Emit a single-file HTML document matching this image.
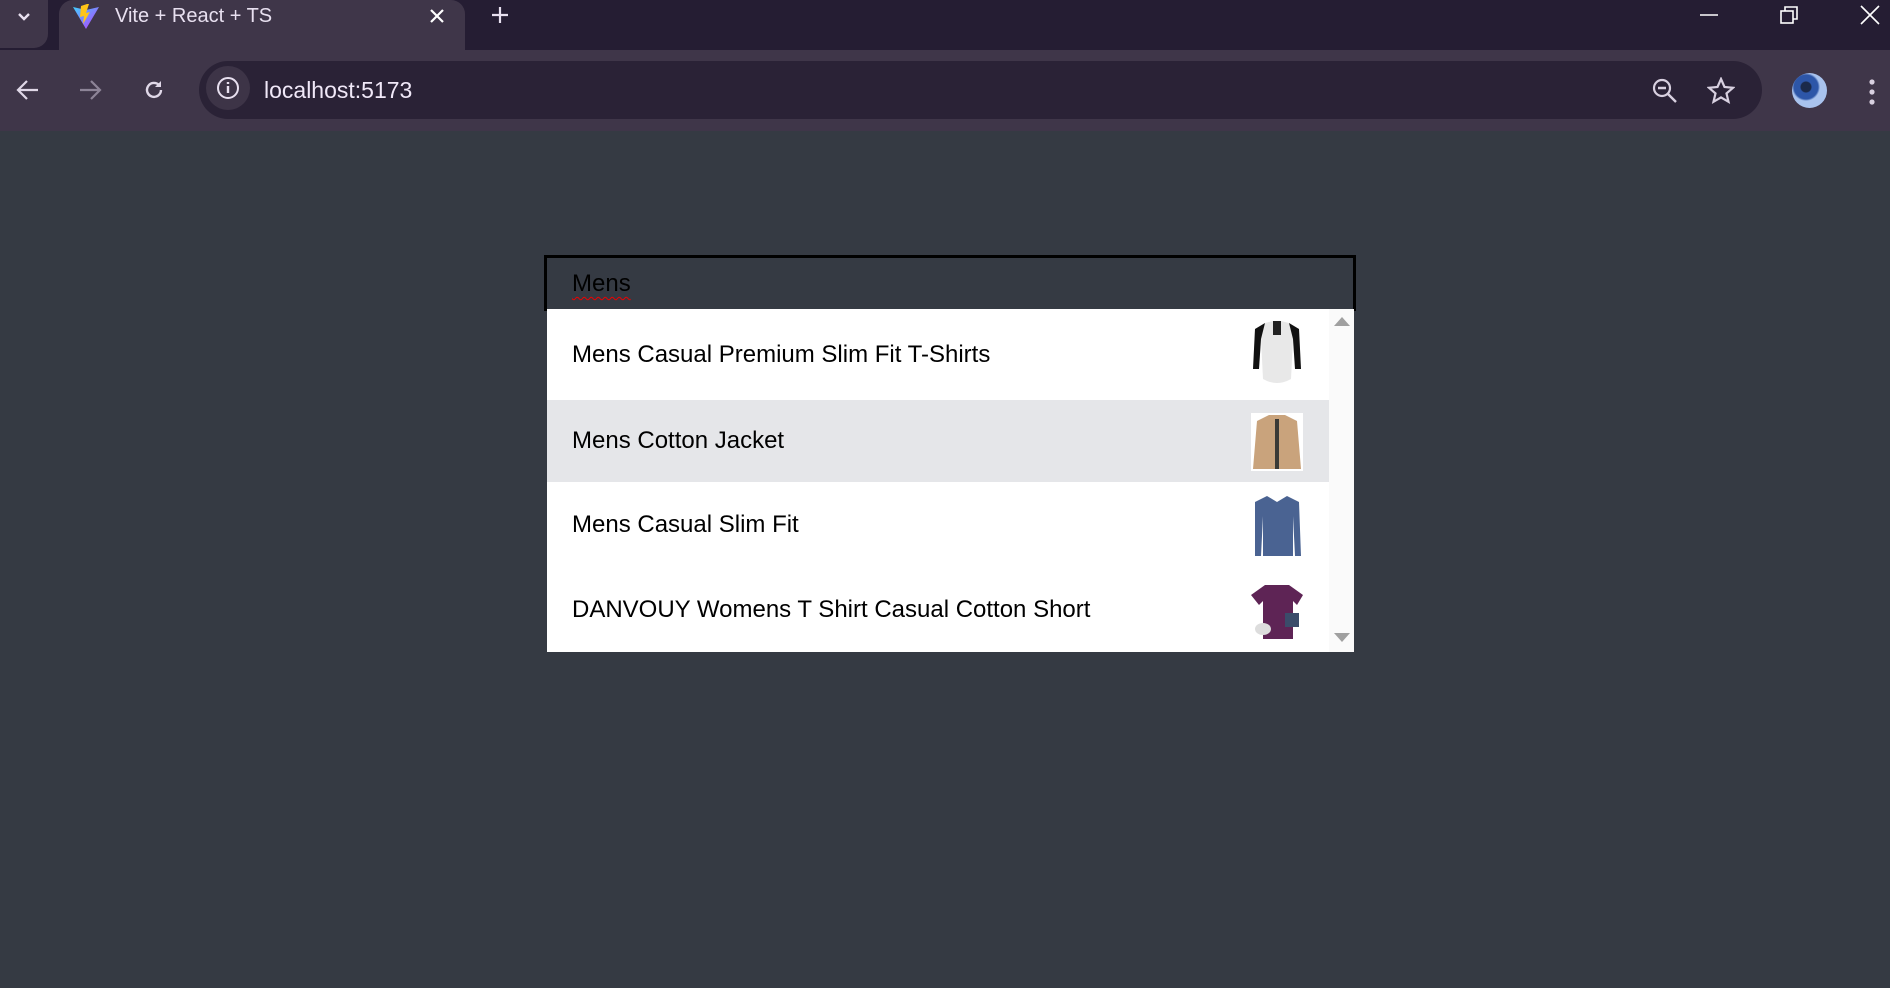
<!DOCTYPE html>
<html><head><meta charset="utf-8"><style>
*{margin:0;padding:0;box-sizing:border-box}
body{width:1890px;height:988px;background:#353a43;font-family:"Liberation Sans",sans-serif;position:relative;overflow:hidden}
.abs{position:absolute}
#tabs{left:0;top:0;width:1890px;height:50px;background:#251d33}
#tool{left:0;top:50px;width:1890px;height:81px;background:#3f3649}
#tab{left:59px;top:0;width:406px;height:52px;background:#3f3649;border-radius:14px 14px 0 0}
#omni{left:199px;top:61px;width:1563px;height:58px;background:#2a2236;border-radius:29px}
.row{position:absolute;left:0;width:782px;font-size:24px;color:#000;padding-left:25px;display:flex;align-items:center}
</style></head><body>
<div id="tabs" class="abs"></div>
<div class="abs" style="left:0;top:0;width:48px;height:48px;background:#3f3649;border-radius:0 0 14px 0"></div>
<svg class="abs" style="left:14px;top:7px" width="20" height="20" viewBox="0 0 20 20"><path d="M5 7l5 5 5-5" stroke="#e8e0f0" stroke-width="2.4" fill="none"/></svg>
<div id="tab" class="abs"></div>
<svg class="abs" style="left:72px;top:3px" width="28" height="28" viewBox="0 0 28 28"><defs><linearGradient id="g" x1="0" y1="0" x2="1" y2="1"><stop offset="0" stop-color="#41d1ff"/><stop offset="1" stop-color="#bd34fe"/></linearGradient></defs><path d="M1 4l13 22 13-22-13 3z" fill="url(#g)"/><path d="M15 1l-6 2-1 11 4-1-1 8 7-12-4 1 3-9z" fill="#ffc517"/></svg>
<div class="abs" style="left:115px;top:5px;font-size:20px;color:#e8e0f0">Vite + React + TS</div>
<svg class="abs" style="left:428px;top:7px" width="18" height="18" viewBox="0 0 18 18"><path d="M3 3l12 12M15 3L3 15" stroke="#fff" stroke-width="2.2"/></svg>
<svg class="abs" style="left:490px;top:5px" width="20" height="20" viewBox="0 0 20 20"><path d="M10 2v16M2 10h16" stroke="#e8e0f0" stroke-width="2.2"/></svg>
<svg class="abs" style="left:1700px;top:13px" width="20" height="4"><path d="M0 2h18" stroke="#fff" stroke-width="1.6"/></svg>
<svg class="abs" style="left:1780px;top:6px" width="20" height="20" viewBox="0 0 20 20"><rect x="1" y="5" width="12" height="12" fill="none" stroke="#fff" stroke-width="1.6"/><path d="M5 5V1h12v12h-4" fill="none" stroke="#fff" stroke-width="1.6"/></svg>
<svg class="abs" style="left:1860px;top:5px" width="20" height="20" viewBox="0 0 20 20"><path d="M1 1l18 18M19 1L1 19" stroke="#fff" stroke-width="1.6"/></svg>
<div id="tool" class="abs"></div>
<svg class="abs" style="left:16px;top:79px" width="24" height="22" viewBox="0 0 24 22"><path d="M22 11H3M11 2l-9 9 9 9" stroke="#e0d8e8" stroke-width="2.2" fill="none"/></svg>
<svg class="abs" style="left:78px;top:79px" width="24" height="22" viewBox="0 0 24 22"><path d="M2 11h19M13 2l9 9-9 9" stroke="#8d8497" stroke-width="2.2" fill="none"/></svg>
<svg class="abs" style="left:142px;top:78px" width="24" height="24" viewBox="0 0 24 24"><path d="M19 12a7 7 0 1 1-2-5" stroke="#e0d8e8" stroke-width="2.4" fill="none"/><path d="M19 3v6h-6z" fill="#e0d8e8"/></svg>
<div id="omni" class="abs"></div>
<div class="abs" style="left:206px;top:66px;width:44px;height:44px;border-radius:50%;background:#3d3447"></div>
<svg class="abs" style="left:216px;top:76px" width="24" height="24" viewBox="0 0 24 24"><circle cx="12" cy="12" r="10" stroke="#e8e0f0" stroke-width="2" fill="none"/><path d="M12 10v7M12 6v2" stroke="#e8e0f0" stroke-width="2.4"/></svg>
<div class="abs" style="left:264px;top:77px;font-size:23px;color:#f0e8f8">localhost:5173</div>
<svg class="abs" style="left:1652px;top:78px" width="26" height="26" viewBox="0 0 26 26"><circle cx="10" cy="10" r="8" stroke="#d8d0e0" stroke-width="2.2" fill="none"/><path d="M6 10h8M16 16l8 8" stroke="#d8d0e0" stroke-width="2.4"/></svg>
<svg class="abs" style="left:1707px;top:77px" width="28" height="28" viewBox="0 0 28 28"><path d="M14 2l3.5 8 8.5.8-6.5 5.6 2 8.4L14 20.4 6.5 24.8l2-8.4L2 10.8l8.5-.8z" stroke="#d8d0e0" stroke-width="2.2" fill="none"/></svg>
<div class="abs" style="left:1792px;top:73px;width:35px;height:35px;border-radius:50%;background:radial-gradient(circle at 40% 40%,#1b2a4a 0 5px,#2d56a8 6px 12px,#a9c3ee 14px)"></div>
<svg class="abs" style="left:1866px;top:78px" width="12" height="28"><circle cx="6" cy="4" r="2.6" fill="#d8d0e0"/><circle cx="6" cy="14" r="2.6" fill="#d8d0e0"/><circle cx="6" cy="24" r="2.6" fill="#d8d0e0"/></svg>
<div class="abs" style="left:544px;top:255px;width:812px;height:56px;border:3px solid #000;border-bottom:none"></div>
<div class="abs" style="left:572px;top:270px;font-size:24px;color:#000;text-decoration:underline wavy #e00;text-underline-offset:5px;text-decoration-thickness:1px">Mens</div>
<div class="abs" style="left:547px;top:309px;width:807px;height:343px;background:#fff;overflow:hidden">
<div class="row" style="top:0;height:91px">Mens Casual Premium Slim Fit T-Shirts</div>
<div class="row" style="top:91px;height:82px;background:#e5e6e9">Mens Cotton Jacket</div>
<div class="row" style="top:173px;height:86px">Mens Casual Slim Fit</div>
<div class="row" style="top:259px;height:84px">DANVOUY Womens T Shirt Casual Cotton Short</div>
<div class="abs" style="left:782px;top:0;width:25px;height:343px;background:#fafafa"></div>
<svg class="abs" style="left:787px;top:8px" width="16" height="10"><path d="M0 9h16L8 0z" fill="#a0a0a0"/></svg>
<svg class="abs" style="left:787px;top:324px" width="16" height="10"><path d="M0 0h16L8 9z" fill="#a0a0a0"/></svg>
<svg class="abs" style="left:704px;top:12px" width="52" height="68" viewBox="0 0 52 68"><path d="M14 2l8-2h8l8 2 10 6 2 40h-6l-2-30-2 40q-14 8-28 0l-2-40-2 30H2L4 8z" fill="#e8e8e8"/><path d="M14 2L4 8 2 48h6l2-30zM38 2l10 6 2 40h-6l-2-30z" fill="#111"/><path d="M22 0h8v14h-8z" fill="#222"/></svg>
<svg class="abs" style="left:704px;top:104px" width="52" height="58" viewBox="0 0 52 58"><rect width="52" height="58" fill="#fff"/><path d="M18 2h16l12 6 4 48H2L6 8z" fill="#c9a37c"/><path d="M24 6h4v50h-4z" fill="#3a3a36"/></svg>
<svg class="abs" style="left:704px;top:185px" width="52" height="64" viewBox="0 0 52 64"><path d="M16 2l10 6 10-6 12 6 2 54h-6l-2-40v40H12V22l-2 40H4L4 8z" fill="#4a6392"/></svg>
<svg class="abs" style="left:704px;top:274px" width="52" height="58" viewBox="0 0 52 58"><path d="M14 2h24l14 10-6 10-4-4 0 38H12V18l-4 4L0 12z" fill="#5e2455"/><rect x="34" y="30" width="14" height="14" fill="#3b4c6a"/><ellipse cx="12" cy="46" rx="8" ry="6" fill="#ddd"/></svg>
</div>
</body></html>
